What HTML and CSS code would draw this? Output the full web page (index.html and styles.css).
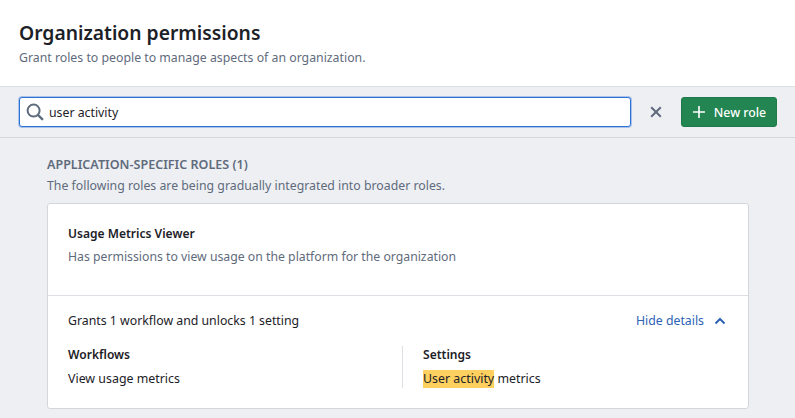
FILE: index.html
```html
<!DOCTYPE html>
<html>
<head>
    <meta charset="utf-8"/>
    <title>Organization permissions</title>
    <link rel="stylesheet" href="styles.css">
</head>
<body>

<div class="header">
    <h1>Organization permissions</h1>
    <p>Grant roles to people to manage aspects of an organization.</p>
</div>

<div class="toolbar">
    <div class="search">
        <svg class="search-icon" width="18" height="18" viewBox="0 0 18 18"><circle cx="7.6" cy="7.6" r="6" fill="none" stroke="#5c6a7c" stroke-width="2"/><path d="M12 12l4.200 4.200" stroke="#5c6a7c" stroke-width="2.400" stroke-linecap="round"/></svg>
        <span>user activity</span>
    </div>
    <svg class="clear" width="12" height="12" viewBox="0 0 12 12"><path d="M1.200 1.200l9.600 9.600M10.800 1.200l-9.600 9.600" stroke="#5f6b7c" stroke-width="2"/></svg>
    <button class="new-role">
        <svg width="14" height="14" viewBox="0 0 14 14"><path d="M7 1v12M1 7h12" stroke="#fff" stroke-width="1.600"/></svg>
        New role
    </button>
</div>

<div class="content">
    <h2>APPLICATION-SPECIFIC ROLES (1)</h2>
    <p class="note">The following roles are being gradually integrated into broader roles.</p>

    <div class="card">
        <div class="card-top">
            <h3>Usage Metrics Viewer</h3>
            <p>Has permissions to view usage on the platform for the organization</p>
        </div>
        <div class="card-bottom">
            <div class="summary">
                <span>Grants 1 workflow and unlocks 1 setting</span>
                <a class="toggle">Hide details
                    <svg width="12" height="8" viewBox="0 0 12 8"><path d="M1.500 6.500L6 2l4.500 4.500" fill="none" stroke="#2d62b5" stroke-width="2"/></svg>
                </a>
            </div>
            <div class="details">
                <div class="col">
                    <h4>Workflows</h4>
                    <p>View usage metrics</p>
                </div>
                <div class="col col-right">
                    <h4>Settings</h4>
                    <p><mark>User activity</mark> metrics</p>
                </div>
            </div>
        </div>
    </div>
</div>

</body>
</html>
```

FILE: styles.css
```css
html, body {
    height: 100%;
}

body {
    margin: 0;
    background: #edeff3;
    font-family: "Noto Sans", Arial, sans-serif;
    font-size: 12.3px;
    color: #1c2127;
    overflow: hidden;
}

h1, h2, h3, h4, p {
    margin: 0;
}

.header {
    height: 87px;
    box-sizing: border-box;
    padding: 19px 19px 0;
    background: #fff;
    border-bottom: 1px solid #dcdfe4;
}

.header h1 {
    font-size: 19.3px;
    line-height: 28px;
    font-weight: 600;
}

.header p {
    margin-top: 2px;
    line-height: 18px;
    color: #5f6b7c;
}

.toolbar {
    height: 51px;
    box-sizing: border-box;
    display: flex;
    align-items: center;
    padding: 0 18px 0 19px;
    border-bottom: 1px solid #d3d6dc;
}

.search {
    flex: 1;
    height: 30px;
    box-sizing: border-box;
    display: flex;
    align-items: center;
    gap: 5px;
    padding-left: 6px;
    background: #fff;
    border: 1px solid #2d72d2;
    border-radius: 3px;
    box-shadow: 0 0 0 1px #a9c3ea;
}

.clear {
    margin: 0 19px;
}

.new-role {
    width: 96px;
    height: 30px;
    display: flex;
    align-items: center;
    justify-content: center;
    gap: 8px;
    padding: 0;
    background: #238551;
    border: 1px solid #1f7a4a;
    border-radius: 3px;
    color: #fff;
    font: 500 12.3px "Noto Sans", Arial, sans-serif;
}

.content {
    padding: 18px 46px 0 47px;
}

.content h2 {
    font-size: 12.55px;
    line-height: 18px;
    font-weight: 600;
    color: #5f6b7c;
}

.note {
    margin-top: 3px;
    line-height: 18px;
    color: #5f6b7c;
}

.card {
    margin-top: 8px;
    background: #fff;
    border: 1px solid #d3d6dc;
    border-radius: 3px;
}

.card-top {
    height: 92px;
    box-sizing: border-box;
    padding: 21px 20px 0;
    border-bottom: 1px solid #dcdfe4;
}

.card-top h3, .details h4 {
    font-size: 12.05px;
    line-height: 18px;
    font-weight: 600;
}

.card-top p {
    margin-top: 5px;
    font-size: 12.25px;
    line-height: 18px;
    color: #5f6b7c;
}

.card-bottom {
    padding: 16px 20px 20px;
}

.summary {
    display: flex;
    justify-content: space-between;
    line-height: 18px;
}

.toggle {
    display: flex;
    align-items: center;
    gap: 10px;
    padding-right: 2px;
    color: #2d62b5;
}

.details {
    display: flex;
    margin-top: 16px;
}

.col {
    width: 334px;
}

.col p {
    margin-top: 6px;
    font-size: 12.4px;
    line-height: 18px;
}

.col-right {
    flex: 1;
    padding-left: 20px;
    border-left: 1px solid #dcdfe4;
}

mark {
    display: inline-block;
    background: #fdd05f;
    color: inherit;
}
```
